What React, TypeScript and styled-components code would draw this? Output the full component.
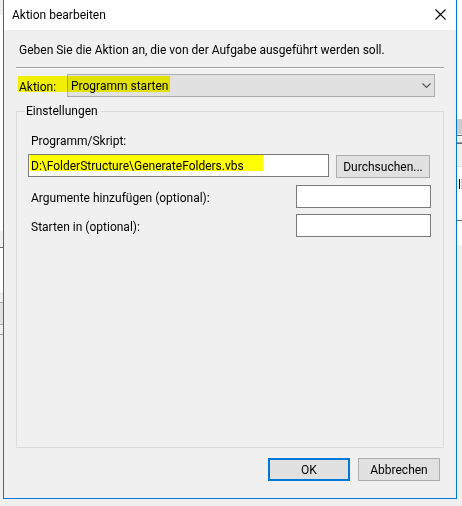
import React from "react";
import styled, { createGlobalStyle } from "styled-components";

const Global = createGlobalStyle`
  * { box-sizing: border-box; }
  body { margin: 0; background: #f0f0f0; }
  body, button, input, select {
    font-family: Roboto, "Noto Sans", sans-serif;
    font-size: 12px;
    line-height: 16px;
    color: #000;
  }
`;

const Desktop = styled.div`
  display: grid;
  grid-template-columns: 3px minmax(0, 1fr) 5px;
  min-height: 100vh;
  padding-bottom: 7px;
`;

const Strip = styled.div`
  display: flex;
  flex-direction: column;
  overflow: hidden;
`;

const Band = styled.div<{ $h: number; $color: string }>`
  flex: none;
  height: ${(p) => p.$h}px;
  padding-left: 1px;
  background: ${(p) => p.$color};
  white-space: nowrap;
  line-height: ${(p) => p.$h}px;
`;

const Dialog = styled.section`
  display: flex;
  flex-direction: column;
  background: #f0f0f0;
  border: 1px solid #0078d7;
  border-top: 0;
`;

const TitleBar = styled.header`
  display: flex;
  align-items: center;
  justify-content: space-between;
  height: 30px;
  padding: 0 10px 2px 8px;
  background: #fff;
`;

const Title = styled.h1`
  margin: 0;
  padding-top: 2px;
  font-size: 12px;
  font-weight: 400;
`;

const CloseButton = styled.button`
  display: flex;
  padding: 0;
  border: 0;
  background: none;
`;

const Body = styled.form`
  display: flex;
  flex: 1;
  flex-direction: column;
  padding: 12px 12px 17px;
`;

const Intro = styled.p`
  margin: 0 0 9px;
  padding-left: 3px;
  white-space: nowrap;
`;

const Rule = styled.hr`
  width: 100%;
  height: 2px;
  margin: 0;
  border: 0;
  border-top: 1px solid #a0a0a0;
  background: #fff;
`;

const ActionRow = styled.div`
  position: relative;
  display: grid;
  grid-template-columns: 48px minmax(0, 1fr);
  align-items: center;
  margin: 5px 9px 6px 3px;
`;

const Highlight = styled.span<{ $left: number; $top: number; $w: number }>`
  position: absolute;
  top: ${(p) => p.$top}px;
  left: ${(p) => p.$left}px;
  width: ${(p) => p.$w}px;
  height: 16px;
  background: #ff0;
  mix-blend-mode: multiply;
  pointer-events: none;
`;

const SelectBox = styled.div`
  position: relative;
  display: flex;
`;

const Select = styled.select`
  appearance: none;
  width: 100%;
  height: 23px;
  padding: 0 24px 0 3px;
  border: 1px solid #adadad;
  border-radius: 0;
  background: #e1e1e1;
`;

const Chevron = styled.svg`
  position: absolute;
  top: 8px;
  right: 4px;
  pointer-events: none;
`;

const Group = styled.fieldset`
  display: flex;
  flex: 1;
  flex-direction: column;
  min-width: 0;
  margin: 0;
  padding: 14px 12px 12px 11px;
  border: 1px solid #dcdcdc;
`;

const Legend = styled.legend`
  margin-left: -4px;
  padding: 0 2px;
`;

const Label = styled.label`
  white-space: nowrap;
`;

const ActionLabel = styled(Label)`
  padding-top: 2px;
`;

const FieldLabel = styled(Label)`
  padding-left: 3px;
`;

const OptionLabel = styled(FieldLabel)`
  padding-top: 3px;
`;

const PathRow = styled.div`
  display: grid;
  grid-template-columns: minmax(0, 1fr) 94px;
  gap: 7px;
  align-items: end;
  margin: 5px 1px 7px 0;
`;

const InputBox = styled.div`
  position: relative;
  display: flex;
  margin-bottom: 1px;
`;

const Input = styled.input`
  width: 100%;
  height: 23px;
  padding: 0 2px;
  border: 1px solid #7a7a7a;
  border-radius: 0;
  background: #fff;
`;

const OptionRow = styled.div`
  display: grid;
  grid-template-columns: minmax(0, 1fr) 135px;
  align-items: center;
  margin-bottom: 6px;
`;

const Button = styled.button<{ $primary?: boolean }>`
  height: 23px;
  padding: 1px 0 0;
  border: ${(p) => (p.$primary ? "2px solid #0078d7" : "1px solid #adadad")};
  border-radius: 0;
  background: #e1e1e1;
  line-height: 18px;
  white-space: nowrap;
`;

const Footer = styled.footer`
  display: grid;
  grid-template-columns: 82px 82px;
  justify-content: end;
  gap: 8px;
  margin: 10px 4px 0 0;
`;

type BandSpec = { h: number; color: string; text?: string };

const leftBands: BandSpec[] = [
  { h: 15, color: "#f0f0f0" },
  { h: 216, color: "#fff" },
  { h: 16, color: "#f0f0f0" },
  { h: 1, color: "#696969" },
  { h: 45, color: "#fff" },
  { h: 1, color: "#dcdcdc" },
  { h: 8, color: "#f0f0f0" },
  { h: 1, color: "#adadad" },
  { h: 21, color: "#e1e1e1" },
  { h: 1, color: "#adadad" },
  { h: 9, color: "#f0f0f0" },
  { h: 1, color: "#a0a0a0" },
];

const rightBands: BandSpec[] = [
  { h: 119, color: "#fff" },
  { h: 15, color: "#cdcdcd" },
  { h: 1, color: "#f0f0f0" },
  { h: 1, color: "#696969" },
  { h: 1, color: "#fff" },
  { h: 5, color: "#f0f0f0" },
  { h: 1, color: "#a0a0a0" },
  { h: 1, color: "#696969" },
  { h: 22, color: "#f0f0f0" },
  { h: 1, color: "#dcdcdc" },
  { h: 10, color: "#fff" },
  { h: 16, color: "#fff", text: "lh" },
  { h: 27, color: "#fff" },
  { h: 1, color: "#696969" },
  { h: 24, color: "#fff" },
];

const Backdrop = ({ bands }: { bands: BandSpec[] }) => (
  <Strip aria-hidden="true">
    {bands.map((b, i) => (
      <Band key={i} $h={b.h} $color={b.color}>
        {b.text}
      </Band>
    ))}
  </Strip>
);

export default function App() {
  return (
    <>
      <Global />
      <Desktop>
        <Backdrop bands={leftBands} />
        <Dialog role="dialog" aria-labelledby="title">
          <TitleBar>
            <Title id="title">Aktion bearbeiten</Title>
            <CloseButton type="button" aria-label="Schließen">
              <svg width="11" height="11" viewBox="0 0 11 11" fill="none" stroke="#000">
                <path d="M.5.5l10 10M10.5.5l-10 10" strokeWidth="1.1" />
              </svg>
            </CloseButton>
          </TitleBar>
          <Body onSubmit={(e) => e.preventDefault()}>
            <Intro>Geben Sie die Aktion an, die von der Aufgabe ausgeführt werden soll.</Intro>
            <Rule />
            <ActionRow>
              <ActionLabel htmlFor="action">Aktion:</ActionLabel>
              <SelectBox>
                <Select id="action" defaultValue="start">
                  <option value="start">Programm starten</option>
                </Select>
                <Chevron width="9" height="7" viewBox="0 0 9 7" fill="none" stroke="#555">
                  <path d="M.5 1.5l4 4 4-4" strokeWidth="1.2" />
                </Chevron>
              </SelectBox>
              <Highlight $left={-1} $top={2} $w={152} />
            </ActionRow>
            <Group>
              <Legend>Einstellungen</Legend>
              <FieldLabel htmlFor="program">Programm/Skript:</FieldLabel>
              <PathRow>
                <InputBox>
                  <Input id="program" defaultValue="D:\FolderStructure\GenerateFolders.vbs" />
                  <Highlight $left={2} $top={1} $w={233} />
                </InputBox>
                <Button type="button">Durchsuchen...</Button>
              </PathRow>
              <OptionRow>
                <OptionLabel htmlFor="args">Argumente hinzufügen (optional):</OptionLabel>
                <Input id="args" />
              </OptionRow>
              <OptionRow>
                <OptionLabel htmlFor="cwd">Starten in (optional):</OptionLabel>
                <Input id="cwd" />
              </OptionRow>
            </Group>
            <Footer>
              <Button type="submit" $primary>OK</Button>
              <Button type="button">Abbrechen</Button>
            </Footer>
          </Body>
        </Dialog>
        <Backdrop bands={rightBands} />
      </Desktop>
    </>
  );
}
